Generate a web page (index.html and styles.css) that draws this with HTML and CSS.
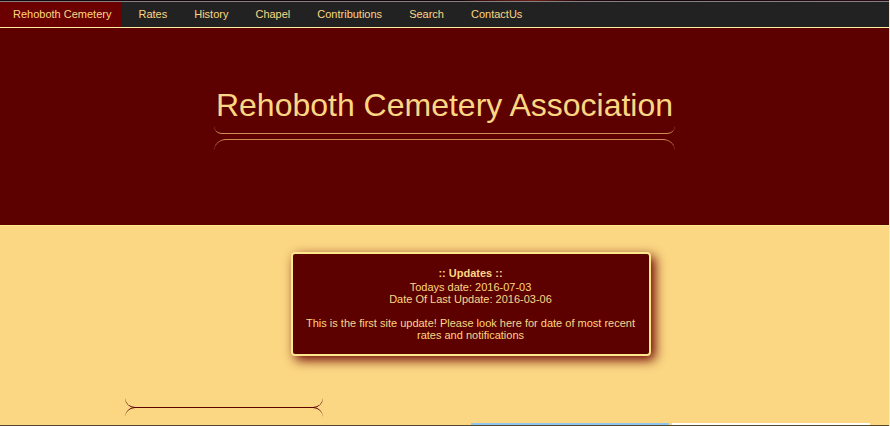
FILE: index.html
```html
<!DOCTYPE html>
<html lang="en">
<head>
<meta charset="utf-8">
<title>Rehoboth Cemetery Association</title>
<link rel="stylesheet" href="styles.css">
</head>
<body>
<div class="top-strip"></div>
<nav class="navbar">
  <a class="nav-link brand" href="#">Rehoboth Cemetery</a>
  <a class="nav-link" href="#">Rates</a>
  <a class="nav-link" href="#">History</a>
  <a class="nav-link" href="#">Chapel</a>
  <a class="nav-link" href="#">Contributions</a>
  <a class="nav-link" href="#">Search</a>
  <a class="nav-link" href="#">ContactUs</a>
</nav>
<header class="hero">
  <div class="hero-title">
    <h1>Rehoboth Cemetery Association</h1>
    <div class="rule rule-up"></div>
    <div class="rule rule-down"></div>
  </div>
</header>
<main class="content">
  <section class="updates">
    <h2>:: Updates ::</h2>
    <p>Todays date: 2016-07-03<br>Date Of Last Update: 2016-03-06</p>
    <p>This is the first site update! Please look here for date of most recent rates and notifications</p>
  </section>
  <div class="divider">
    <div class="rule rule-up"></div>
    <div class="rule rule-down"></div>
  </div>
  <div class="panels">
    <div class="panel panel-photo"></div>
    <div class="panel panel-text"></div>
  </div>
</main>
<div class="bottom-edge"></div>
</body>
</html>
```
FILE: styles.css
```css
* {
  box-sizing: border-box;
}

body {
  margin: 0;
  border-right: 1px solid #f6e8d0;
  background: #fbd783;
  color: #fbd783;
  font-family: Arial, "Liberation Sans", sans-serif;
  font-size: 11px;
  line-height: 12px;
}

.top-strip {
  height: 2px;
  border-bottom: 1px solid #858085;
  background: linear-gradient(90deg, #140608 0 52%, #3a0c08 54%, #6b1d12 60%, #250709 65%, #120508 72%, #2a0a0e 100%) padding-box;
}

.navbar {
  display: flex;
  height: 26px;
  border-bottom: 1px solid #fff0a0;
  background: #222222;
}

.nav-link {
  padding: 6px 14px 7px 13px;
  color: #fbd783;
  text-decoration: none;
}

.brand {
  margin-right: 4px;
  padding-right: 10px;
  background: #6b0000;
}

.hero {
  display: flex;
  justify-content: center;
  padding: 57px 0 73px;
  border-bottom: 1px solid #ffe78c;
  background: #5c0000;
}

h1 {
  margin: 0 0 1px;
  padding: 0 2px;
  font-size: 32px;
  font-weight: 400;
  line-height: 40px;
}

.rule {
  border: 0 solid #c98d55;
}

.rule-up {
  height: 8px;
  border-bottom-width: 1px;
  border-radius: 0 0 8px 8px;
}

.rule-down {
  height: 13px;
  margin-top: 5px;
  border-top-width: 1px;
  border-radius: 12px 12px 0 0;
}

.content {
  padding-top: 26px;
}

.updates {
  width: 360px;
  margin: 0 auto;
  padding: 13px 10px;
  border: 2px solid #ffe78c;
  border-radius: 4px;
  background: #5c0000;
  box-shadow: 4px 4px 12px #6b0000;
  text-align: center;
  position: relative;
  left: 26px;
}

.updates h2 {
  margin: 0 0 2px;
  font-size: 11px;
  line-height: 12px;
}

.updates p {
  margin: 0 0 12px;
}

.updates p:last-child {
  margin-bottom: 0;
}

.divider {
  width: 198px;
  margin: 42px 0 0 125px;
}

.divider .rule {
  border-color: #5c0000;
}

.divider .rule-up {
  height: 10px;
  border-radius: 0 0 10px 10px;
}

.divider .rule-down {
  height: 10px;
  margin-top: -1px;
  border-radius: 10px 10px 0 0;
}

.panels {
  display: flex;
  justify-content: flex-end;
  gap: 3px;
  margin-top: 6px;
  padding-right: 19px;
}

.panel {
  width: 198px;
  height: 2px;
}

.panel-photo {
  background: #8fc3f0;
}

.panel-text {
  background: #ffffff;
}

.bottom-edge {
  height: 1px;
  background: #54482f;
}
```
